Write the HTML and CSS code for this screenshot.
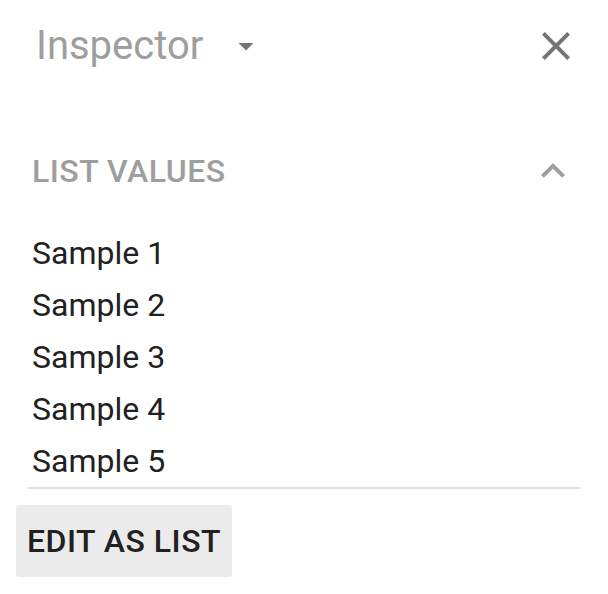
FILE: index.html
```html
<!DOCTYPE html>
<html>
<head>
<meta charset="utf-8">
<link rel="stylesheet" href="styles.css">
</head>
<body>
<div class="panel">
  <div class="header">
    <div class="title">Inspector</div>
    <svg class="drop" viewBox="0 0 24 24" width="36" height="36"><path d="M7 10l5 5 5-5z"/></svg>
    <div class="spacer"></div>
    <svg class="close" viewBox="0 0 24 24" width="48" height="48"><path d="M19 6.41L17.59 5 12 10.59 6.41 5 5 6.41 10.59 12 5 17.59 6.41 19 12 13.41 17.59 19 19 17.59 13.41 12z"/></svg>
  </div>
  <div class="section-head">
    <div class="section-title">LIST VALUES</div>
    <svg class="chev" viewBox="0 0 24 24" width="48" height="48"><path d="M12 8l-6 6 1.41 1.41L12 10.83l4.59 4.58L18 14z"/></svg>
  </div>
  <div class="list">
    <div class="item">Sample 1</div>
    <div class="item">Sample 2</div>
    <div class="item">Sample 3</div>
    <div class="item">Sample 4</div>
    <div class="item">Sample 5</div>
  </div>
  <div class="actions">
    <div class="btn">EDIT AS LIST</div>
  </div>
</div>
</body>
</html>
```

FILE: styles.css
```css
html, body {
  margin: 0;
  padding: 0;
  background: #ffffff;
}
body {
  font-family: Roboto, "Noto Sans", sans-serif;
  width: 608px;
  height: 594px;
  overflow: hidden;
}
.panel {
  display: flex;
  flex-direction: column;
}
.header {
  display: flex;
  align-items: center;
  height: 48px;
  margin-top: 22px;
  padding: 0 28px 0 36px;
}
.title {
  font-size: 40px;
  line-height: 48px;
  color: #9e9e9e;
  font-weight: 400;
}
.drop {
  fill: #757575;
  margin-left: 25px;
}
.spacer {
  flex: 1;
}
.close {
  fill: #757575;
}
.section-head {
  display: flex;
  align-items: center;
  justify-content: space-between;
  height: 48px;
  margin-top: 77px;
  padding: 0 31px 0 32px;
}
.section-title {
  font-size: 32px;
  line-height: 48px;
  font-weight: 500;
  letter-spacing: 0.5px;
  color: #9e9e9e;
}
.chev {
  fill: #9e9e9e;
}
.list {
  margin: 32px 28px 0 28px;
  border-bottom: 2px solid #e0e0e0;
  padding-left: 4px;
}
.item {
  font-size: 32px;
  line-height: 52px;
  color: #212121;
}
.actions {
  display: flex;
  padding: 16px 0 0 16px;
}
.btn {
  background: #ebebeb;
  border-radius: 3px;
  height: 72px;
  line-height: 72px;
  padding: 0 11px;
  font-size: 32px;
  font-weight: 500;
  letter-spacing: 0.5px;
  color: #212121;
}
```
